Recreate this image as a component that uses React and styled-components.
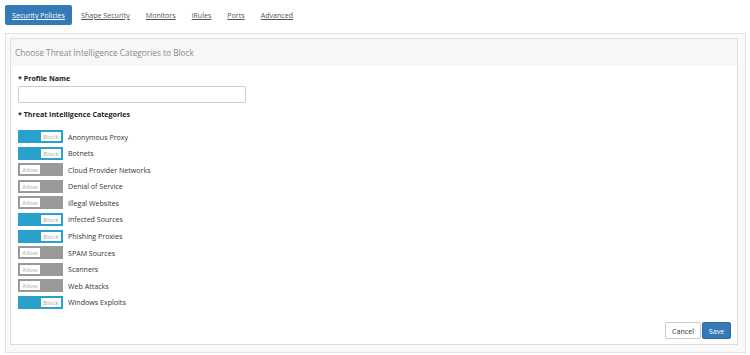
import React from "react";
import styled, { createGlobalStyle } from "styled-components";

const Global = createGlobalStyle`
  html, body { margin: 0; padding: 0; background: #fff; }
  body { font-family: "Open Sans", "Liberation Sans", sans-serif; color: #333; }
  * { box-sizing: border-box; }
`;

const Page = styled.div`
  width: 750px;
  height: 355px;
  padding: 5px 4px 0 5px;
  display: flex;
  flex-direction: column;
`;

const Tabs = styled.nav`
  display: flex;
  align-items: center;
  height: 20px;
`;

const Tab = styled.a`
  font-size: 7.1px;
  color: ${(p) => (p.$active ? "#fff" : "#555")};
  background: ${(p) => (p.$active ? "#337ab7" : "transparent")};
  border-radius: 2px;
  text-decoration: underline;
  height: 20px;
  width: ${(p) => (p.$active ? "67px" : "auto")};
  display: flex;
  align-items: center;
  justify-content: center;
  margin-right: ${(p) => p.$mr}px;
  cursor: pointer;
  white-space: nowrap;
`;

const Outer = styled.div`
  margin-top: 8px;
  border: 1px solid #e2e2e2;
  background: #f9f9f9;
  padding: 4px 7px 7px 4px;
  height: 320px;
  display: flex;
`;

const Inner = styled.section`
  flex: 1;
  border: 1px solid #dedede;
  background: #fff;
  display: flex;
  flex-direction: column;
`;

const Header = styled.header`
  height: 27px;
  background: #f7f7f7;
  display: flex;
  align-items: center;
  padding-left: 4px;
  font-size: 8.3px;
  color: #8a8a8a;
`;

const Body = styled.div`
  flex: 1;
  padding: 6px 6px 5px 7px;
  display: flex;
  flex-direction: column;
`;

const Label = styled.div`
  font-size: 7.1px;
  font-weight: 700;
  color: #222;
  height: 12px;
  line-height: 12px;
  margin-top: ${(p) => p.$mt || 0}px;
`;

const Input = styled.input`
  width: 228px;
  height: 17px;
  margin-top: 2px;
  border: 1px solid #ccc;
  border-radius: 2px;
  outline: none;
`;

const List = styled.div`
  margin-top: 10px;
  display: flex;
  flex-direction: column;
  gap: 3.6px;
`;

const Row = styled.div`
  display: flex;
  align-items: center;
  height: 13px;
  gap: 5px;
`;

const Toggle = styled.div`
  width: 45px;
  height: 13px;
  border: 1px solid ${(p) => (p.$on ? "#2aa1cb" : "#999")};
  background: ${(p) => (p.$on ? "#2aa1cb" : "#999")};
  display: flex;
  justify-content: ${(p) => (p.$on ? "flex-end" : "flex-start")};
  padding: 1px;
`;

const Knob = styled.span`
  width: 20px;
  height: 100%;
  background: #fff;
  color: #aaa;
  font-size: 6.1px;
  display: flex;
  align-items: center;
  justify-content: center;
`;

const Name = styled.span`
  font-size: 7.1px;
  color: #333;
`;

const Footer = styled.div`
  margin-top: auto;
  display: flex;
  justify-content: flex-end;
  gap: 1px;
`;

const Button = styled.button`
  height: 17px;
  width: ${(p) => p.$w}px;
  padding: 0;
  font-family: inherit;
  font-size: 7.1px;
  border-radius: 2px;
  border: 1px solid ${(p) => (p.$primary ? "#2e6da4" : "#ccc")};
  background: ${(p) => (p.$primary ? "#337ab7" : "#fff")};
  color: ${(p) => (p.$primary ? "#fff" : "#333")};
  cursor: pointer;
`;

const tabs = [
  { t: "Security Policies", active: true, mr: 9 },
  { t: "Shape Security", mr: 16 },
  { t: "Monitors", mr: 16 },
  { t: "iRules", mr: 16 },
  { t: "Ports", mr: 16 },
  { t: "Advanced", mr: 0 },
];

const cats = [
  ["Anonymous Proxy", true],
  ["Botnets", true],
  ["Cloud Provider Networks", false],
  ["Denial of Service", false],
  ["Illegal Websites", false],
  ["Infected Sources", true],
  ["Phishing Proxies", true],
  ["SPAM Sources", false],
  ["Scanners", false],
  ["Web Attacks", false],
  ["Windows Exploits", true],
];

export default function App() {
  return (
    <>
      <Global />
      <Page>
        <Tabs>
          {tabs.map((x) => (
            <Tab key={x.t} $active={x.active} $mr={x.mr}>
              {x.t}
            </Tab>
          ))}
        </Tabs>
        <Outer>
          <Inner>
            <Header>Choose Threat Intelligence Categories to Block</Header>
            <Body>
              <Label>* Profile Name</Label>
              <Input type="text" />
              <Label $mt={5}>* Threat Intelligence Categories</Label>
              <List>
                {cats.map(([n, on]) => (
                  <Row key={n}>
                    <Toggle $on={on}>
                      <Knob>{on ? "Block" : "Allow"}</Knob>
                    </Toggle>
                    <Name>{n}</Name>
                  </Row>
                ))}
              </List>
              <Footer>
                <Button $w={36}>Cancel</Button>
                <Button $primary $w={29}>Save</Button>
              </Footer>
            </Body>
          </Inner>
        </Outer>
      </Page>
    </>
  );
}
